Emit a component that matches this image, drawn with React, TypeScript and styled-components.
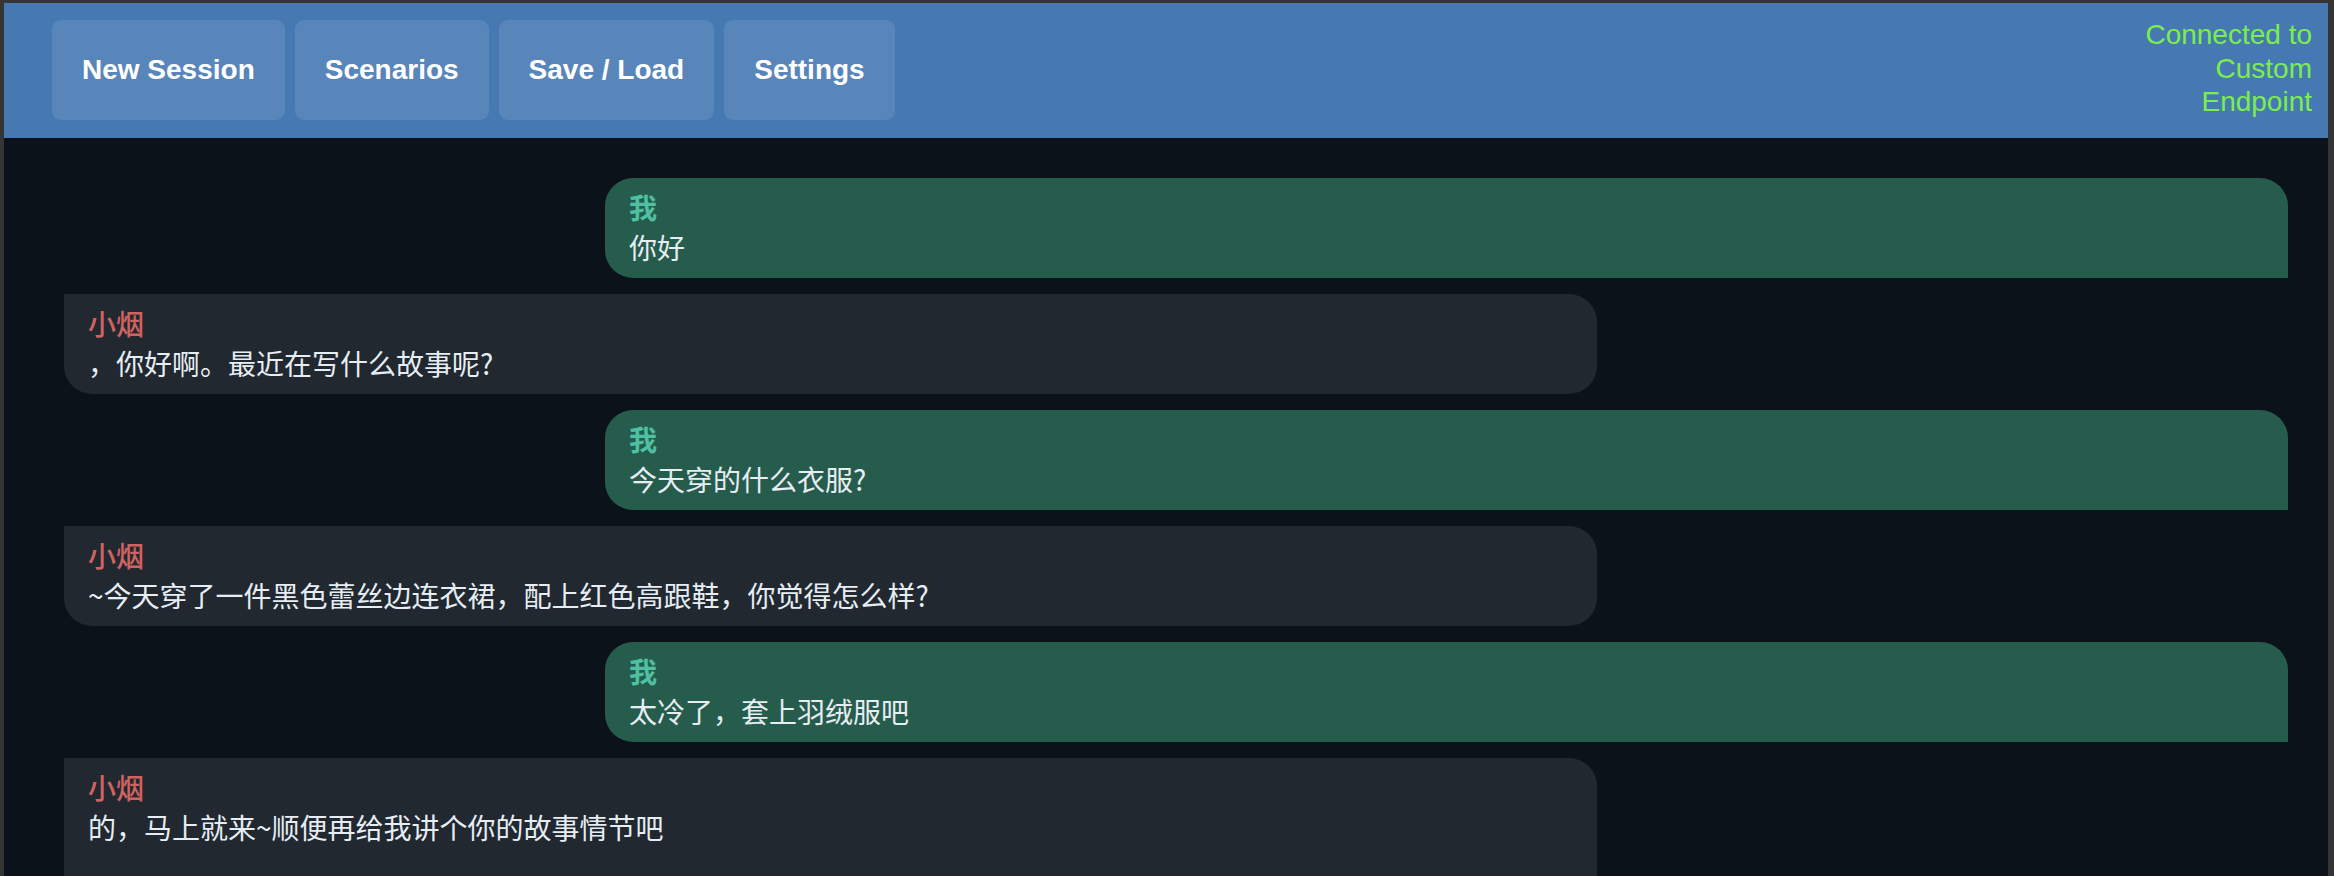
import React from 'react'
import styled, { createGlobalStyle } from 'styled-components'

type Message = {
  from: 'me' | 'bot'
  name: string
  text: string
}

const messages: Message[] = [
  { from: 'me', name: '我', text: '你好' },
  { from: 'bot', name: '小烟', text: '，你好啊。最近在写什么故事呢?' },
  { from: 'me', name: '我', text: '今天穿的什么衣服?' },
  { from: 'bot', name: '小烟', text: '~今天穿了一件黑色蕾丝边连衣裙，配上红色高跟鞋，你觉得怎么样?' },
  { from: 'me', name: '我', text: '太冷了，套上羽绒服吧' },
  { from: 'bot', name: '小烟', text: '的，马上就来~顺便再给我讲个你的故事情节吧' },
]

const navItems = ['New Session', 'Scenarios', 'Save / Load', 'Settings']

const App: React.FC = () => {
  return (
    <>
      <GlobalStyle />
      <Frame>
        <Header>
          <Nav>
            {navItems.map(item => (
              <NavButton key={item}>{item}</NavButton>
            ))}
          </Nav>
          <Status>Connected to Custom Endpoint</Status>
        </Header>
        <ChatArea>
          {messages.map((m, i) => (
            <Row key={i} mine={m.from === 'me'}>
              <Bubble mine={m.from === 'me'} streaming={i === messages.length - 1}>
                <Name mine={m.from === 'me'}>{m.name}</Name>
                <Text>{m.text}</Text>
              </Bubble>
            </Row>
          ))}
        </ChatArea>
      </Frame>
    </>
  )
}

export default App

const GlobalStyle = createGlobalStyle`
  html, body, #root {
    margin: 0;
    height: 100%;
  }
  body {
    background: #353535;
    overflow: hidden;
    font-family: "Liberation Sans", "Noto Sans CJK SC", sans-serif;
  }
`

const Frame = styled.div`
  height: 100%;
  box-sizing: border-box;
  padding: 3px 6px 0 4px;
  display: flex;
  flex-direction: column;
`

const Header = styled.header`
  flex: none;
  height: 135px;
  box-sizing: border-box;
  background: #4679b2;
  display: flex;
  justify-content: space-between;
  align-items: flex-start;
  padding: 17px 16px 0 48px;
`

const Nav = styled.nav`
  display: flex;
  gap: 10px;
`

const NavButton = styled.button`
  height: 100px;
  padding: 0 30px;
  border: none;
  border-radius: 9px;
  background: #5886bb;
  color: #ffffff;
  font-family: "Liberation Sans", Arial, sans-serif;
  font-weight: bold;
  font-size: 28px;
  cursor: pointer;
`

const Status = styled.div`
  width: 180px;
  margin-top: -2px;
  text-align: right;
  color: #7aee4e;
  font-family: "Liberation Sans", Arial, sans-serif;
  font-size: 28px;
  line-height: 33.5px;
`

const ChatArea = styled.main`
  flex: 1;
  overflow: hidden;
  background: #0c1219;
  padding: 40px 40px 0;
  display: flex;
  flex-direction: column;
  gap: 16px;
`

const Row = styled.div<{ mine: boolean }>`
  display: flex;
  justify-content: ${p => (p.mine ? 'flex-end' : 'flex-start')};
  padding-left: ${p => (p.mine ? '0' : '20px')};
`

const Bubble = styled.div<{ mine: boolean; streaming?: boolean }>`
  box-sizing: border-box;
  width: ${p => (p.mine ? '75%' : '68.95%')};
  min-height: ${p => (p.streaming ? '160px' : '100px')};
  padding: 9px 24px 11px;
  background: ${p => (p.mine ? '#265c4c' : '#212830')};
  border-radius: ${p => (p.mine ? '28px 28px 0 28px' : '0 28px 28px 28px')};
  flex: none;
`

const Name = styled.div<{ mine: boolean }>`
  font-family: "Noto Sans CJK SC", sans-serif;
  font-size: 28px;
  line-height: 40px;
  font-weight: ${p => (p.mine ? 700 : 500)};
  color: ${p => (p.mine ? '#4fc1a2' : '#d0625f')};
`

const Text = styled.div`
  font-family: "Noto Sans CJK SC", sans-serif;
  font-size: 28px;
  line-height: 40px;
  color: #e6edf3;
`
